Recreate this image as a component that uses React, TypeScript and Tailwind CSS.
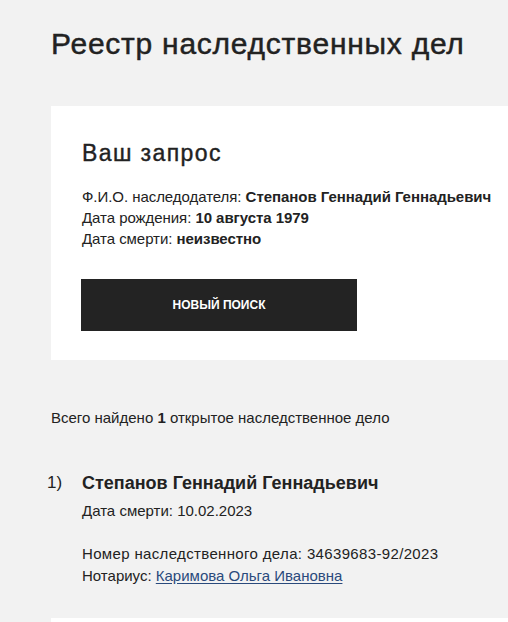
import React from 'react';

const font = { fontFamily: '"Liberation Sans", Arial, sans-serif' };

export default function App() {
  return (
    <div className="h-[622px] bg-[#f2f2f2] text-[#222222] overflow-hidden" style={font}>
      <div className="pl-[51px]">
        <h1 className="pt-[27px] text-[30px] leading-[34px] font-normal tracking-[0.75px] [-webkit-text-stroke:0.45px_#222222]">
          Реестр наследственных дел
        </h1>

        <section className="mt-[45px] bg-white pl-[31px] pt-[34px] pb-[29px]">
          <h2 className="text-[23px] leading-[26px] tracking-[1.4px] [-webkit-text-stroke:0.4px_#222222]">Ваш запрос</h2>
          <div className="mt-[20px] text-[15px] leading-[21px] tracking-[-0.05px]">
            <p>
              Ф.И.О. наследодателя: <b>Степанов Геннадий Геннадьевич</b>
            </p>
            <p>
              Дата рождения: <b>10 августа 1979</b>
            </p>
            <p>
              Дата смерти: <b>неизвестно</b>
            </p>
          </div>
          <button className="mt-[30px] -ml-px w-[276px] h-[52px] bg-[#232323] text-white text-[12px] font-bold uppercase">
            Новый поиск
          </button>
        </section>

        <p className="mt-[48px] text-[15px] leading-[20px]">
          Всего найдено <b>1</b> открытое наследственное дело
        </p>

        <ol className="mt-[43px]">
          <li className="flex">
            <span className="-ml-[4px] w-[35px] text-[17px] leading-[24px]">1)</span>
            <div>
              <h3 className="text-[18px] leading-[24px] font-bold">Степанов Геннадий Геннадьевич</h3>
              <p className="mt-[6px] text-[15px] leading-[20px]">Дата смерти: 10.02.2023</p>
              <p className="mt-[22px] text-[15px] leading-[22px] tracking-[0.35px]">Номер наследственного дела: 34639683-92/2023</p>
              <p className="text-[15px] leading-[22px]">
                Нотариус:{' '}
                <a href="#" className="text-[#2a4a7c] underline underline-offset-2">
                  Каримова Ольга Ивановна
                </a>
              </p>
            </div>
          </li>
        </ol>

        <div className="mt-[31px] h-[40px] bg-white" />
      </div>
    </div>
  );
}
